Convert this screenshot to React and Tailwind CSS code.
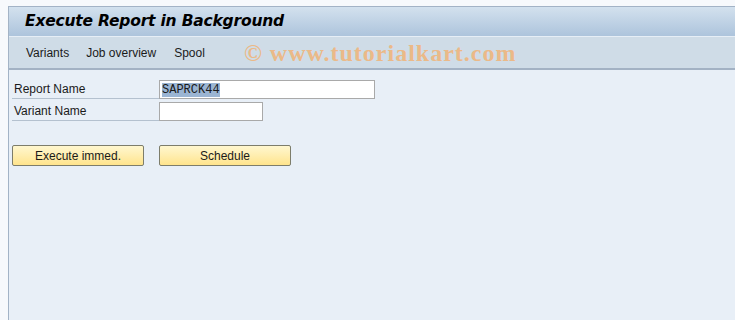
import React from 'react';

export default function App() {
  return (
    <div className="w-[735px] h-[320px] bg-[#f7f9fc] pt-[6px] pl-[8px] overflow-hidden font-['Liberation_Sans',Arial,sans-serif] text-[12px] text-[#1a1a1a]">
      <div className="h-full flex flex-col bg-[#e8eff7] border-t border-l border-[#a3b3c6]">
        {/* Title */}
        <div className="h-[30px] flex items-center pl-[16px] bg-gradient-to-b from-[#d3e1ee] to-[#adc4dc] border-b border-[#e6eef6]">
          <h1 className="font-['DejaVu_Sans',Verdana,sans-serif] font-bold italic text-[15.5px] text-black tracking-[-0.2px]">
            Execute Report in Background
          </h1>
        </div>
        {/* Menu */}
        <div className="h-[33px] flex items-center pl-[17px] pt-[1px] bg-[#cfdce7] border-b-2 border-[#a3b2c4]">
          <span className="mr-[17px]">Variants</span>
          <span className="mr-[18px]">Job overview</span>
          <span>Spool</span>
          <span className="ml-[39px] font-['Liberation_Serif',serif] font-bold text-[24px] leading-none text-[#ebb988] tracking-[1px]">
            © www.tutorialkart.com
          </span>
        </div>
        {/* Form */}
        <div className="pt-[9px] pl-[3px]">
          <div className="flex items-end h-[20px]">
            <div className="w-[147px] h-[20px] border-b border-[#b4c1cf] pl-[2px] flex items-end">Report Name</div>
            <div className="w-[216px] h-[19px] bg-white border border-[#a9a9a9] flex items-center pl-[2px]">
              <span className="bg-[#9bb5d3] font-['Liberation_Mono',monospace] text-[12px] leading-[14px]">SAPRCK44</span>
            </div>
          </div>
          <div className="flex items-end h-[22px]">
            <div className="w-[147px] h-[22px] border-b border-[#b4c1cf] pl-[2px] flex items-end">Variant Name</div>
            <div className="w-[104px] h-[19px] bg-white border border-[#a9a9a9]"></div>
          </div>
          <div className="flex gap-[15px] mt-[24px]">
            <button className="w-[132px] h-[21px] rounded-[2px] border border-[#7d7d6b] bg-gradient-to-b from-[#fff7cf] to-[#ffe48c] text-[12px]">
              Execute immed.
            </button>
            <button className="w-[132px] h-[21px] rounded-[2px] border border-[#7d7d6b] bg-gradient-to-b from-[#fff7cf] to-[#ffe48c] text-[12px]">
              Schedule
            </button>
          </div>
        </div>
      </div>
    </div>
  );
}
